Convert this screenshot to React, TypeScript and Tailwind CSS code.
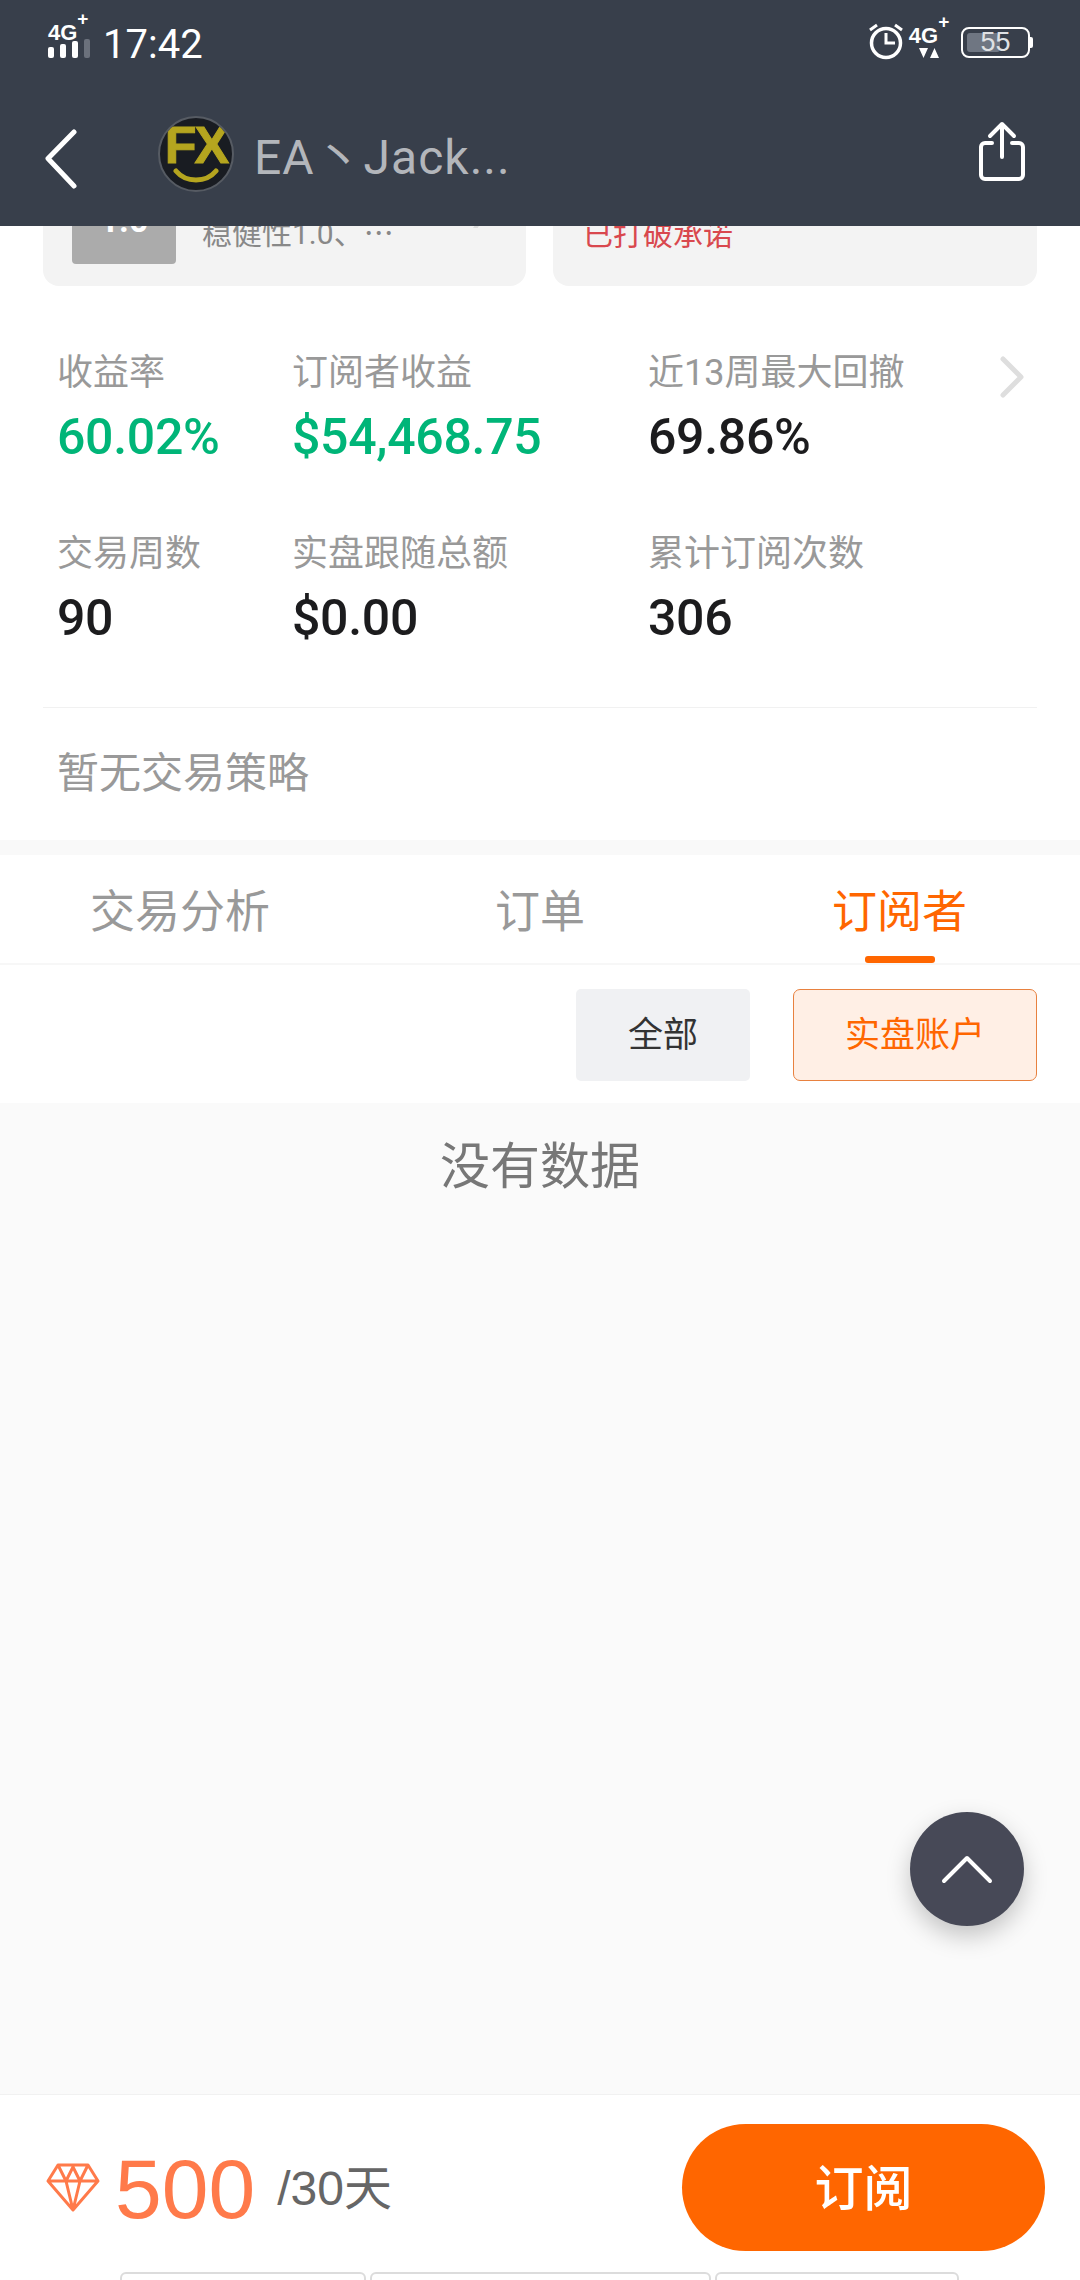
import React from 'react';

const CJK = "font-['Roboto','Noto_Sans_CJK_SC',sans-serif]";

const stats = [
  { label: '收益率', value: '60.02%', green: true },
  { label: '订阅者收益', value: '$54,468.75', green: true },
  { label: '近13周最大回撤', value: '69.86%' },
  { label: '交易周数', value: '90' },
  { label: '实盘跟随总额', value: '$0.00' },
  { label: '累计订阅次数', value: '306' },
];

function StatusBar() {
  return (
    <div className="h-[88px] flex items-start justify-between pl-[48px] pr-[47px] pt-[18px] text-white">
      <div className="flex items-start">
        <div className="w-[42px] flex flex-col">
          <div className="mt-[3px] h-[24px] text-[22px] leading-[24px] font-bold whitespace-nowrap font-['Liberation_Sans',sans-serif]">
            4G<sup className="text-[19px] leading-[0] align-[6px]">+</sup>
          </div>
          <svg width="42" height="20" viewBox="0 0 42 20" className="mt-[-6px]">
            <rect x="0" y="8" width="6" height="11" rx="2" fill="#fff" />
            <rect x="12" y="5" width="6" height="14" rx="2" fill="#fff" />
            <rect x="24" y="2" width="6" height="17" rx="2" fill="#fff" />
            <rect x="36" y="0" width="6" height="19" rx="2" fill="#6b717c" />
          </svg>
        </div>
        <div className="ml-[13px] mt-[3px] text-[40px] leading-[48px] font-['Roboto',sans-serif]">17:42</div>
      </div>
      <div className="flex items-start">
        <svg width="36" height="38" viewBox="0 0 36 38" className="mt-[4px]" fill="none" stroke="#fff">
          <circle cx="18" cy="21" r="14.500" strokeWidth="3.500" />
          <path d="M18 11v10h9" strokeWidth="3" />
          <path d="M2 8l7-5M34 8l-7-5" strokeWidth="3" />
        </svg>
        <div className="ml-[5px] w-[40px] flex flex-col items-center">
          <div className="h-[24px] mt-[6px] text-[22px] leading-[24px] font-bold whitespace-nowrap font-['Liberation_Sans',sans-serif]">
            4G<sup className="text-[19px] leading-[0] align-[6px]">+</sup>
          </div>
          <svg width="22" height="11" viewBox="0 0 22 11" fill="#fff">
            <path d="M1 0h9l-4.500 10zM12 10h9l-4.500-10z" />
          </svg>
        </div>
        <div className="ml-[12px] mt-[9px] flex items-center">
          <div className="relative w-[69px] h-[31px] border-[2px] border-white rounded-[8px]">
            <div className="absolute left-[4px] top-[4px] bottom-[4px] w-[33px] bg-[#6f7682] rounded-[3px]" />
            <div className="absolute inset-0 flex items-center justify-center text-[27px] leading-none text-[#dfe1e4] font-['Liberation_Sans',sans-serif]">
              55
            </div>
          </div>
          <div className="w-[3px] h-[11px] bg-white rounded-r-[2px]" />
        </div>
      </div>
    </div>
  );
}

function Header() {
  return (
    <div className="h-[226px] shrink-0 bg-[#383f4b]">
      <StatusBar />
      <div className="h-[138px] flex items-start">
        <svg width="34" height="60" viewBox="0 0 34 60" className="ml-[44px] mt-[41px]" fill="none" stroke="#fff" strokeWidth="5" strokeLinecap="round" strokeLinejoin="round">
          <path d="M30 3L4 29.500L30 57" />
        </svg>
        <div className="ml-[80px] mt-[28px] relative w-[76px] h-[76px] rounded-full bg-[#191c22] border-[2px] border-[#565b63] overflow-hidden flex justify-center">
          <span className="mt-[1px] text-[52px] leading-[52px] font-bold tracking-[-2px] text-[#b5a51f] [-webkit-text-stroke:1px_#b5a51f] font-['Liberation_Sans',sans-serif]">FX</span>
          <svg width="48" height="18" viewBox="0 0 48 18" className="absolute left-[12px] top-[50px]" fill="none" stroke="#b5a51f" strokeWidth="5" strokeLinecap="round">
            <path d="M4 3C14 15 34 15 44 3" />
          </svg>
        </div>
        <div className={`ml-[20px] mt-[38px] text-[48px] leading-[64px] tracking-[1px] text-[#b3b6bb] ${CJK}`}>EA丶Jack...</div>
        <svg width="50" height="62" viewBox="0 0 50 62" className="ml-auto mr-[53px] mt-[33px]" fill="none" stroke="#fff" strokeWidth="4" strokeLinecap="round" strokeLinejoin="round">
          <path d="M15 22H8a4 4 0 0 0-4 4v28a4 4 0 0 0 4 4h34a4 4 0 0 0 4-4V26a4 4 0 0 0-4-4h-7" />
          <path d="M25 36V3M13 15L25 3l12 12" />
        </svg>
      </div>
    </div>
  );
}

function ClippedCards() {
  return (
    <div className={`h-[60px] shrink-0 overflow-hidden px-[43px] flex items-end gap-[27px] ${CJK}`}>
      <div className="relative w-[483px] h-[120px] shrink-0 bg-[#f3f3f3] rounded-b-[16px] flex items-start pl-[29px] pt-[4px]">
        <div className="w-[104px] h-[94px] bg-[#ababab] rounded-[4px] text-center text-[34px] leading-[100px] font-bold text-white">
          1.0
        </div>
        <div className="ml-[26px] mt-[38px] text-[30px] leading-[46px] text-[#888] whitespace-nowrap">
          稳健性1.0、<span className="font-['Noto_Sans_CJK_SC',sans-serif]">…</span>
        </div>
        <svg width="20" height="40" viewBox="0 0 20 40" className="absolute right-[36px] top-[22px]" fill="none" stroke="#dcdcdc" strokeWidth="4">
          <path d="M3 4l12 20-12 20" />
        </svg>
      </div>
      <div className="w-[484px] h-[120px] shrink-0 bg-[#f3f3f3] rounded-b-[16px] pl-[30px] pt-[46px] text-[30px] leading-[46px] text-[#d9484e]">
        已打破承诺
      </div>
    </div>
  );
}

function Stats() {
  return (
    <div className={`relative h-[554px] shrink-0 pt-[62px] ${CJK}`}>
      <div className="grid grid-cols-[235px_356px_1fr] gap-y-[62px] pl-[57px]">
        {stats.map((s) => (
          <div key={s.label}>
            <div className="h-[50px] text-[36px] leading-[50px] text-[#999] whitespace-nowrap">{s.label}</div>
            <div className={`mt-[9px] h-[60px] text-[50px] leading-[60px] font-medium tracking-[-0.3px] ${s.green ? 'text-[#00b578]' : 'text-[#1c1c1e]'}`}>
              {s.value}
            </div>
          </div>
        ))}
      </div>
      <svg width="28" height="44" viewBox="0 0 28 44" className="absolute right-[54px] top-[69px]" fill="none" stroke="#dedede" strokeWidth="5" strokeLinecap="round" strokeLinejoin="round">
        <path d="M5 4l18 18L5 40" />
      </svg>
      <div className="mx-[43px] mt-[59px] h-[1px] bg-[#f1f1f1]" />
      <div className="pl-[57px] mt-[36px] text-[42px] leading-[60px] text-[#999]">暂无交易策略</div>
    </div>
  );
}

function Tabs() {
  return (
    <div className={`h-[110px] shrink-0 bg-white border-b-[2px] border-[#f7f7f7] flex text-[45px] leading-[60px] text-[#999] ${CJK}`}>
      <div className="w-[360px] pt-[28px] text-center">交易分析</div>
      <div className="w-[360px] pt-[28px] text-center">订单</div>
      <div className="relative w-[360px] pt-[28px] text-center text-[#ff6600]">
        <span className="ml-[-1px]">订阅者</span>
        <div className="absolute left-[145px] bottom-0 w-[70px] h-[7px] bg-[#ff6600] rounded-[3px]" />
      </div>
    </div>
  );
}

function Filters() {
  return (
    <div className={`h-[138px] shrink-0 bg-white flex justify-end items-start gap-[43px] pt-[24px] pr-[43px] text-[35px] ${CJK}`}>
      <div className="w-[174px] h-[92px] pt-[2px] bg-[#f0f1f3] rounded-[5px] flex items-center justify-center text-[#333]">全部</div>
      <div className="w-[244px] h-[92px] pt-[2px] bg-[#ffefe5] border-[1.5px] border-[#e8813f] rounded-[7px] flex items-center justify-center text-[#ff6600]">实盘账户</div>
    </div>
  );
}

function Footer() {
  return (
    <div className="relative h-[186px] shrink-0 bg-white border-t-[1px] border-[#f1f1f1] flex items-start">
      <svg width="54" height="50" viewBox="0 0 54 50" className="ml-[46px] mt-[68px]" fill="none" stroke="#ff7a4a" strokeWidth="3" strokeLinejoin="round">
        <path d="M12 2h30l10 16L27 47 2 18zM2 18h50M12 2l8 16 7 29 7-29 8-16M20 18l7-14 7 14" />
      </svg>
      <div className="ml-[15px] mt-[47px] text-[84px] leading-[94px] text-[#ff7a4a] font-['Liberation_Sans',sans-serif]">500</div>
      <div className="ml-[22px] mt-[64px] text-[48px] leading-[60px] text-[#666] font-['Liberation_Sans','Noto_Sans_CJK_SC',sans-serif]">/30天</div>
      <div className={`ml-auto mr-[35px] mt-[29px] w-[363px] h-[127px] pt-[4px] rounded-full bg-[#ff6600] flex items-center justify-center text-[49px] font-medium text-white ${CJK}`}>
        订阅
      </div>
      {/* keyboard-ish tabs peeking in at the very bottom of the screen */}
      <div className="absolute left-[120px] bottom-[-10px] flex gap-[4px]">
        <div className="w-[246px] h-[18px] bg-white border-[2px] border-[#dcdcdc] rounded-t-[6px]" />
        <div className="w-[341px] h-[18px] bg-white border-[2px] border-[#dcdcdc] rounded-t-[6px]" />
        <div className="w-[244px] h-[18px] bg-white border-[2px] border-[#dcdcdc] rounded-t-[6px]" />
      </div>
    </div>
  );
}

export default function App() {
  return (
    <div className="relative w-[1080px] h-[2280px] overflow-hidden bg-white flex flex-col">
      <Header />
      <ClippedCards />
      <Stats />
      <div className="h-[15px] shrink-0 bg-[#f9f9f9]" />
      <Tabs />
      <Filters />
      <div className={`flex-1 bg-[#fafafa] pt-[30px] text-center text-[50px] leading-[68px] text-[#777] ${CJK}`}>没有数据</div>
      <Footer />

      {/* back to top */}
      <div className="absolute left-[910px] top-[1812px] w-[114px] h-[114px] rounded-full bg-[#474957] shadow-[0_10px_24px_rgba(0,0,0,0.22)] flex items-center justify-center">
        <svg width="52" height="30" viewBox="0 0 52 30" fill="none" stroke="#fff" strokeWidth="4" strokeLinecap="round" strokeLinejoin="round">
          <path d="M3 27L26 4l23 23" />
        </svg>
      </div>
    </div>
  );
}
